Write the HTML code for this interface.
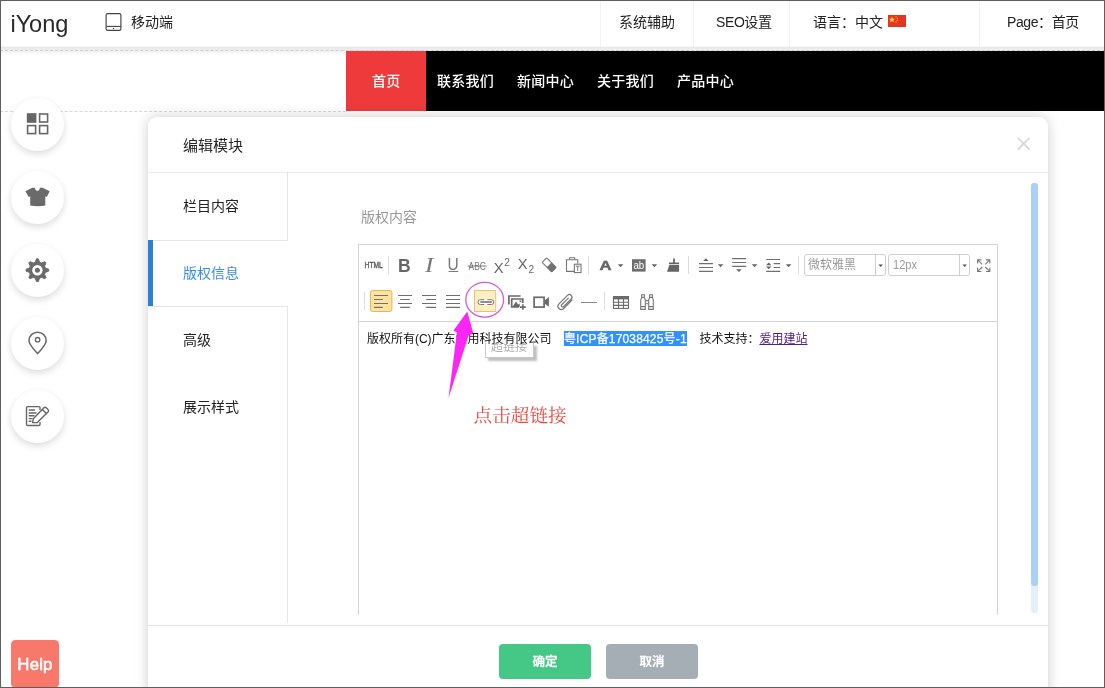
<!DOCTYPE html>
<html lang="zh-CN">
<head>
<meta charset="utf-8">
<title>iYong</title>
<style>
*{box-sizing:border-box;margin:0;padding:0}
html,body{width:1105px;height:688px;overflow:hidden;background:#fff}
body{font-family:"Liberation Sans","Noto Sans CJK SC",sans-serif;color:#222;position:relative}
#wrap{position:absolute;left:0;top:0;width:1105px;height:688px;overflow:hidden;will-change:transform}
.abs{position:absolute}
#frame{position:absolute;left:0;top:0;width:1105px;height:688px;border:1px solid #5e5e5e;z-index:100;pointer-events:none}
/* top bar */
#topbar{position:absolute;left:0;top:0;width:1105px;height:50px;background:#fff}
#tband{position:absolute;left:0;top:46px;width:1105px;height:9px;background:linear-gradient(to bottom,rgba(0,0,0,0),rgba(0,0,0,.085) 16%,rgba(0,0,0,.06) 55%,rgba(0,0,0,0))}
#dash1{position:absolute;left:0;top:50px;width:1105px;border-top:1px dashed #cfcfcf}
#logo{position:absolute;left:10.5px;top:9px;font-size:23.6px;line-height:30px;color:#2a2a2a;letter-spacing:-0.1px}
#mobile{position:absolute;left:131px;top:12.2px;font-size:14px;line-height:20px;color:#222}
.tsep{position:absolute;top:0;width:1px;height:47px;background:#f2f2f2}
.titem{position:absolute;top:12px;font-size:14px;line-height:20px;color:#222;white-space:nowrap}
/* nav */
#nav{position:absolute;left:346px;top:51px;width:759px;height:60px;background:#000}
#nav .home{position:absolute;left:0;top:0;width:80px;height:60px;background:#ee3a3b}
#nav span{position:absolute;top:20px;font-size:14px;line-height:20px;font-weight:500;letter-spacing:.25px;color:#fff;white-space:nowrap}
#dash2{position:absolute;left:0;top:111px;width:346px;border-top:1px dashed #d8d8d8}
/* side circles */
.circ{position:absolute;left:10.5px;width:53px;height:53px;border-radius:50%;background:#fff;box-shadow:0 3px 7px rgba(0,0,0,.14)}
.circ svg{position:absolute;left:0;top:0}
/* modal */
#modal{position:absolute;left:148px;top:117px;width:900px;height:600px;background:#fff;border-radius:9px;box-shadow:0 0 13px rgba(0,0,0,.2)}
#mtitle{position:absolute;left:35px;top:18px;font-size:15px;line-height:22px;color:#222}
#mclose{position:absolute;left:869.3px;top:20.4px;width:13.4px;height:13.4px}
#mhead{position:absolute;left:0;top:55px;width:900px;height:1px;background:#ececec}
.tab{position:absolute;left:0;width:140px;height:67px;font-size:14px;line-height:69px;padding-left:35px;color:#222}
.tab.on{color:#3a8ee6}
#bar{position:absolute;left:0;top:123px;width:4.7px;height:66px;background:#2d7fd8}
.vline{position:absolute;left:139px;width:1px;background:#e6e6e6}
.hline{position:absolute;left:0;width:140px;height:1px;background:#e6e6e6}
#lbl{position:absolute;left:213px;top:90px;font-size:14px;line-height:20px;color:#999}
#editor{position:absolute;left:210px;top:127px;width:640px;height:371px;border:1px solid #d4d4d4;border-bottom:none}
#tbar{position:absolute;left:0;top:0;width:638px;height:77px;border-bottom:1px solid #d4d4d4;background:#fff}
#etext{position:absolute;left:7.9px;top:85px;font-size:12px;line-height:18px;color:#111;white-space:nowrap}
#etext .sel{background:#3390ff;color:#fff;letter-spacing:.17px;padding:1.4px 0 0 0;-webkit-text-stroke:.25px #fff}
#etext .gap{display:inline-block;height:1px}
#etext a{color:#551a8b;text-decoration:underline}
#tip{position:absolute;left:126px;top:98px;width:48.5px;height:14.9px;border:1px solid #c8c8c8;border-top:none;background:#fff;box-shadow:2.5px 2.5px 2px rgba(0,0,0,.25);overflow:hidden}
#tip span{position:absolute;left:5px;top:-2.4px;font-size:12px;line-height:12px;color:#b0b0b0;white-space:nowrap}
#scroll{position:absolute;left:883px;top:66px;width:7px;height:430px;background:#e3f0fc;border-radius:3px}
#scroll i{position:absolute;left:0;top:0;width:7px;height:403px;background:#a9d1f6;border-radius:3px}
#mfoot{position:absolute;left:0;top:508px;width:900px;height:1px;background:#e6e6e6}
.btn{position:absolute;top:527px;width:92px;height:35px;border-radius:4px;color:#fff;font-size:12.5px;font-weight:500;-webkit-text-stroke:.3px #fff;line-height:37.5px;text-align:center}
#ok{left:351px;background:#45c785}
#cancel{left:458px;background:#a5aeb4}
#help{position:absolute;left:11px;top:640px;width:48px;height:48px;border-radius:4.5px;background:#f8796c;color:#fff;font-weight:normal;-webkit-text-stroke:.55px #fff;font-size:16.8px;line-height:50px;text-align:center;letter-spacing:.2px}
</style>
</head>
<body>
<div id="wrap">
<div id="topbar">
  <div id="logo">iYong</div>
  <svg class="abs" style="left:104px;top:11px" width="20" height="22" viewBox="104 11 20 22"><rect x="106.1" y="13.6" width="14.8" height="16.8" rx="1.6" fill="none" stroke="#444" stroke-width="1.15"/><line x1="106.1" y1="26.4" x2="120.9" y2="26.4" stroke="#444" stroke-width="1.1"/><circle cx="113.5" cy="28.5" r="0.7" fill="#444"/></svg>
  <div id="mobile">移动端</div>
  <div class="tsep" style="left:600px"></div>
  <div class="tsep" style="left:693px"></div>
  <div class="tsep" style="left:789px"></div>
  <div class="tsep" style="left:979px"></div>
  <div class="titem" style="left:619px">系统辅助</div>
  <div class="titem" style="left:716px;letter-spacing:-0.4px">SEO设置</div>
  <div class="titem" style="left:813px">语言：中文</div>
  <svg class="abs" style="left:887.5px;top:15px" width="18" height="12" viewBox="0 0 18 12"><rect width="18" height="12" fill="#e4351f"/><polygon points="4,1.6 4.8,3.8 7.1,3.8 5.3,5.2 5.9,7.4 4,6.1 2.1,7.4 2.7,5.2 0.9,3.8 3.2,3.8" fill="#ffd83a"/><circle cx="8" cy="1.8" r=".6" fill="#ffd83a"/><circle cx="9.3" cy="3.3" r=".6" fill="#ffd83a"/><circle cx="9.3" cy="5.4" r=".6" fill="#ffd83a"/><circle cx="8" cy="6.9" r=".6" fill="#ffd83a"/></svg>
  <div class="titem" style="left:1007px;letter-spacing:-0.4px">Page：首页</div>
</div>
<div id="tband"></div><div id="dash1"></div>
<div id="nav">
  <div class="home"></div>
  <span style="left:26px">首页</span>
  <span style="left:91px">联系我们</span>
  <span style="left:171px">新闻中心</span>
  <span style="left:251px">关于我们</span>
  <span style="left:331px">产品中心</span>
</div>
<div id="dash2"></div>

<div class="circ" style="top:97.5px"></div>
<div class="circ" style="top:170.5px"></div>
<div class="circ" style="top:243.5px"></div>
<div class="circ" style="top:316.5px"></div>
<div class="circ" style="top:389.5px"></div>
<svg id="sideico" class="abs" style="left:0;top:90px" width="80" height="360" viewBox="0 90 80 360">
  <!-- grid -->
  <g fill="none" stroke="#666" stroke-width="1.6">
    <rect x="27.6" y="114" width="8" height="8" fill="#666"/>
    <rect x="39.6" y="114" width="8" height="8"/>
    <rect x="27.6" y="125.6" width="8" height="8"/>
    <rect x="39.6" y="125.6" width="8" height="8"/>
  </g>
  <!-- tshirt -->
  <path d="M32.2,187.7 L35,187.7 C35.1,191.9 39.7,191.9 39.8,187.7 L42.6,187.7 L49.7,191.3 L46.8,197 L45.3,196.2 L45.3,205.5 Q37.7,207 30.2,205.5 L30.2,196.2 L28.7,197 L25.4,191.3 Z" fill="#6a6a6a"/>
  <!-- gear -->
  <path d="M35.2,262.2 L36.5,258.8 L38.3,258.8 L39.6,262.2 L41.5,263.0 L44.8,261.6 L46.0,262.8 L44.6,266.1 L45.4,268.0 L48.8,269.3 L48.8,271.1 L45.4,272.4 L44.6,274.3 L46.0,277.6 L44.8,278.8 L41.5,277.4 L39.6,278.2 L38.3,281.6 L36.5,281.6 L35.2,278.2 L33.3,277.4 L30.0,278.8 L28.8,277.6 L30.2,274.3 L29.4,272.4 L26.0,271.1 L26.0,269.3 L29.4,268.0 L30.2,266.1 L28.8,262.8 L30.0,261.6 L33.3,263.0Z" fill="#6a6a6a" stroke="#6a6a6a" stroke-width="0.9" stroke-linejoin="round"/>
  <circle cx="37.4" cy="270.2" r="5.2" fill="#fff"/>
  <circle cx="37.4" cy="270.2" r="2.5" fill="#6a6a6a"/>
  <!-- pin -->
  <path d="M37.6,353.6 C34,349.5 29,345 29,340.6 C29,335.8 32.8,332.3 37.6,332.3 C42.4,332.3 46.2,335.8 46.2,340.6 C46.2,345 41.2,349.5 37.6,353.6 Z" fill="none" stroke="#666" stroke-width="1.5" stroke-linejoin="round"/>
  <circle cx="37.6" cy="339.7" r="2.2" fill="none" stroke="#666" stroke-width="1.4"/>
  <!-- edit -->
  <g fill="none" stroke="#666" stroke-width="1.4" stroke-linejoin="round" stroke-linecap="round">
    <path d="M40,409.5 L40,407.8 Q40,406.6 38.8,406.6 L27.7,406.6 Q26.5,406.6 26.5,407.8 L26.5,424.3 Q26.5,425.5 27.7,425.5 L38.8,425.5 Q40,425.5 40,424.3 L40,422.8"/>
    <path d="M29.2,410 H34.5 M29.2,413 H36 M29.2,415.8 H34 M29.2,418.6 H32 M29.2,421.2 H31"/>
    <path d="M33.3,418.8 L44.2,407.6 Q45.2,406.8 46.2,407.8 L48.2,409.8 Q49,410.8 48.2,411.8 L37.3,422.6 L32.6,422.6 Z"/>
    <path d="M42.4,409.6 L46.4,413.6"/>
  </g>
</svg>

<div id="modal">
  <div id="mtitle">编辑模块</div>
  <svg id="mclose" viewBox="0 0 14 14"><path d="M0.8 0.8L13.2 13.2M13.2 0.8L0.8 13.2" stroke="#d6d6d6" stroke-width="1.7" fill="none"/></svg>
  <div id="mhead"></div>
  <div class="tab" style="top:55px">栏目内容</div>
  <div class="tab on" style="top:122px">版权信息</div>
  <div class="tab" style="top:189px">高级</div>
  <div class="tab" style="top:256px">展示样式</div>
  <div class="vline" style="top:55px;height:68px"></div>
  <div class="vline" style="top:189px;height:317px"></div>
  <div class="hline" style="top:123px"></div><div id="bar"></div>
  <div class="hline" style="top:189px"></div>
  <div id="lbl">版权内容</div>
  <div id="editor">
    <div id="tbar"></div>
    <div id="tip"><span>超链接</span></div>
    <div id="etext">版权所有(C)广东爱用科技有限公司<i class="gap" style="width:12.4px"></i><span class="sel">粤ICP备17038425号-1</span><i class="gap" style="width:12.7px"></i>技术支持：<a>爱用建站</a></div>
  </div>
  <div id="scroll"><i></i></div>
  <div id="mfoot"></div>
  <div class="btn" id="ok">确定</div>
  <div class="btn" id="cancel">取消</div>
</div>
<svg id="tb" class="abs" style="left:350px;top:240px;z-index:5" width="660" height="200" viewBox="350 240 660 200" font-family="'Liberation Sans','Noto Sans CJK SC',sans-serif">
  <!-- separators -->
  <g stroke="#dcdcdc" stroke-width="1">
    <path d="M388.5,256V274 M588.5,256V274 M688.5,256V274 M798.5,256V274 M364.5,292V310 M604.5,292V310"/>
  </g>
  <!-- row 1 -->
  <text x="364.6" y="268.2" font-size="8.6" fill="#555" stroke="#555" stroke-width="0.35" textLength="18.2" lengthAdjust="spacingAndGlyphs">HTML</text>
  <text x="397.9" y="271.8" font-size="17.6" font-weight="bold" fill="#666">B</text>
  <text x="425" y="271.8" font-size="20" font-style="italic" fill="#777" textLength="8.4" lengthAdjust="spacingAndGlyphs" font-family="'Liberation Serif',serif">I</text>
  <text x="447.6" y="269.8" font-size="16" fill="#777" textLength="11.2" lengthAdjust="spacingAndGlyphs">U</text>
  <path d="M448.6,271.5H458.2" stroke="#777" stroke-width="1"/>
  <text x="468.6" y="269.8" font-size="11.6" fill="#777" textLength="17.2" lengthAdjust="spacingAndGlyphs">ABC</text>
  <path d="M467.6,266H486.6" stroke="#777" stroke-width="1"/>
  <text x="493.8" y="272.8" font-size="14.8" fill="#666">X</text>
  <text x="504.2" y="265.8" font-size="11" fill="#666" textLength="5.6" lengthAdjust="spacingAndGlyphs">2</text>
  <text x="517.8" y="269.2" font-size="14.8" fill="#666">X</text>
  <text x="528.4" y="272.8" font-size="11" fill="#666" textLength="5.6" lengthAdjust="spacingAndGlyphs">2</text>
  <!-- eraser -->
  <g transform="translate(549.1 264.9) rotate(45)">
    <rect x="-6.8" y="-3.2" width="13.6" height="6.4" rx="0.8" fill="#fff" stroke="#777" stroke-width="1.1"/>
    <rect x="0" y="-3.4" width="7" height="6.8" fill="#707070"/>
  </g>
  <!-- paste -->
  <g fill="none" stroke="#777" stroke-width="1.1">
    <path d="M574.4,271.4H566.5V259.7H577.8V263.6"/>
    <path d="M569.6,259.7V257.8H574.7V259.7"/>
    <rect x="574.4" y="264.2" width="6.6" height="8.4" fill="#fff"/>
    <path d="M575.8,266.2H579.6 M577.7,266.2V270.9" stroke-width="1"/>
  </g>
  <!-- forecolor A -->
  <text x="599.4" y="269.8" font-size="13" font-weight="bold" fill="#666" stroke="#666" stroke-width=".5" textLength="12" lengthAdjust="spacingAndGlyphs">A</text>
  <path d="M617.8,264.3h5.6l-2.8,3z M651.6,264.3h5.6l-2.8,3z M717.8,264.3h5.6l-2.8,3z M751.8,264.3h5.6l-2.8,3z M785.8,264.3h5.6l-2.8,3z" fill="#666"/>
  <rect x="632" y="259.2" width="13.6" height="12.4" fill="#6e6e6e"/>
  <text x="633.4" y="269.2" font-size="10" fill="#fff" textLength="10.8" lengthAdjust="spacingAndGlyphs">ab</text>
  <!-- broom -->
  <path d="M673.1,258.4h1.8v4h4.2v1.5h-10.2v-1.5h4.2z M669.4,264.7h9.7v7.1h-12.1z" fill="#666"/>
  <!-- rowspacing top -->
  <g stroke="#707070" stroke-width="1.1">
    <path d="M699,263.6h14 M699,267.5h14 M699,271.4h14"/>
    <path d="M732.2,258.6h14 M732.2,262.5h14 M732.2,266.4h14"/>
    <path d="M766.2,259.5h14 M773.6,263.6h6.6 M773.6,267.5h6.6 M766.2,271.4h14"/>
  </g>
  <path d="M703.2,261h5.4l-2.7,-2.8z M736.2,269.2h5.6l-2.8,2.9z M766,265.3h5.4l-2.7,-2.9z M766,266.4h5.4l-2.7,2.9z" fill="#666"/>
  <!-- combos -->
  <g fill="#fff" stroke="#cfcfcf" stroke-width="1">
    <rect x="804.5" y="254.5" width="81" height="21" rx="2.5"/>
    <rect x="888.5" y="254.5" width="81" height="21" rx="2.5"/>
    <path d="M875.5,254.5v21 M959.5,254.5v21"/>
  </g>
  <path d="M878.4,264.4h4.6l-2.3,2.6z M962.4,264.4h4.6l-2.3,2.6z" fill="#555"/>
  <text x="808" y="269.4" font-size="12" fill="#9a9a9a">微软雅黑</text>
  <text x="893" y="269.4" font-size="12" fill="#9a9a9a" textLength="24" lengthAdjust="spacingAndGlyphs">12px</text>
  <!-- fullscreen -->
  <g fill="none" stroke="#777" stroke-width="1.1">
    <path d="M977.6,263.6V259.9H981.4 M986,259.9H989.8V263.6 M989.8,267.8V271.5H986 M981.4,271.5H977.6V267.8"/>
    <path d="M977.9,260.2L982.2,264.4 M989.5,260.2L985.2,264.4 M989.5,271.2L985.2,267 M977.9,271.2L982.2,267"/>
  </g>
  <!-- row 2 -->
  <rect x="370.5" y="290.5" width="21.4" height="21" rx="2" fill="#fde3a0" stroke="#e8b551" stroke-width="1"/>
  <g stroke="#707070" stroke-width="1.2">
    <path d="M374,295.5h14 M374,299.5h8.8 M374,303.5h14 M374,307.4h8.8"/>
    <path d="M398,295.5h14 M400.2,299.5h9.6 M398,303.5h14 M400.2,307.4h9.6"/>
    <path d="M422,295.5h14 M426.2,299.5h9.8 M422,303.5h14 M426.2,307.4h9.8"/>
    <path d="M446,295.5h14 M446,299.5h14 M446,303.5h14 M446,307.4h14"/>
  </g>
  <!-- link button -->
  <rect x="474.5" y="290.5" width="21.2" height="21" fill="#feefc0" stroke="#ecbd85" stroke-width="1"/>
  <rect x="477.9" y="299.7" width="15.8" height="4.8" rx="2.4" fill="#fff"/>
  <path d="M484.2,299.7H480.4A2.4,2.4 0 0 0 480.4,304.5H484.2 M487.3,299.7H491.4A2.4,2.4 0 0 1 491.4,304.5H487.3" fill="none" stroke="#7a7a7a" stroke-width="1"/>
  <path d="M480.8,302h10.6" stroke="#6a6a6a" stroke-width="1.4" stroke-linecap="round"/>
  <!-- image -->
  <g fill="none" stroke="#6a6a6a" stroke-width="1.7">
    <path d="M508.9,304.4V296H520.6"/>
    <path d="M522.8,303V299H511.7V307H519"/>
  </g>
  <path d="M512.4,307L516,301.6L518.2,304.4L519.4,303.4L520.4,307Z M519.6,300.4h1.7v1.7h-1.7z" fill="#6a6a6a"/>
  <path d="M519.6,307.1h6.4 M522.8,303.9v6.2" stroke="#fff" stroke-width="3.2"/>
  <path d="M520,307.1h5.8 M522.9,304.2v5.6" stroke="#6a6a6a" stroke-width="1.6"/>
  <!-- video -->
  <rect x="534.1" y="297.3" width="10" height="9.8" fill="none" stroke="#6a6a6a" stroke-width="1.7"/>
  <path d="M544.6,300.4L548.9,297V306.8L544.6,303.6Z" fill="#6a6a6a"/>
  <!-- clip -->
  <g transform="translate(565.3 302.2) rotate(-45)">
    <path d="M6.2,1.1 H-5.6 A3.3,3.3 0 0 1 -5.6,-5.5 H6.4 A2.6,2.6 0 0 1 6.4,-0.3 H-4.4 A1.1,1.1 0 0 1 -4.4,-2.9 H5" transform="translate(0 2.2)" fill="none" stroke="#777" stroke-width="1.25" stroke-linecap="round"/>
  </g>
  <!-- hr -->
  <path d="M581,302.5h16" stroke="#888" stroke-width="1"/>
  <!-- table -->
  <g fill="none" stroke="#6a6a6a" stroke-width="1.1">
    <rect x="613.5" y="296.6" width="15" height="11.8"/>
    <path d="M613.5,302.3h15 M613.5,305.4h15 M618.5,299v9.4 M623.5,299v9.4"/>
  </g>
  <rect x="613" y="296.1" width="16" height="3.3" fill="#6a6a6a"/>
  <!-- binoculars -->
  <g fill="none" stroke="#777" stroke-width="1.1">
    <path d="M641.6,297.4L640.7,300V309.4H645.3V300L644.4,297.4Z M641.6,297.4V294.7H644.4V297.4 M640.7,306.6H645.3"/>
    <path d="M649.6,297.4L648.7,300V309.4H653.3V300L652.4,297.4Z M649.6,297.4V294.7H652.4V297.4 M648.7,306.6H653.3"/>
    <path d="M645.3,300.6H648.7 M645.3,303.8H648.7"/>
  </g>
  <!-- annotation -->
  <ellipse cx="484.7" cy="299.7" rx="18.9" ry="17.4" fill="none" stroke="#d05ed6" stroke-width="1.3"/>
  <path d="M448.5,398 L456.9,332.5 L453.5,330.6 L467.3,311.4 L473.2,332.9 L468.5,335.8 Z" fill="#fb26f6"/>
  <text x="473.6" y="421.6" font-size="18.6" fill="#e8473d" font-family="'Liberation Serif','Noto Serif CJK SC',serif">点击超链接</text>
</svg>
<div id="help">Help</div>
<div id="frame"></div>
</div>
</body>
</html>
